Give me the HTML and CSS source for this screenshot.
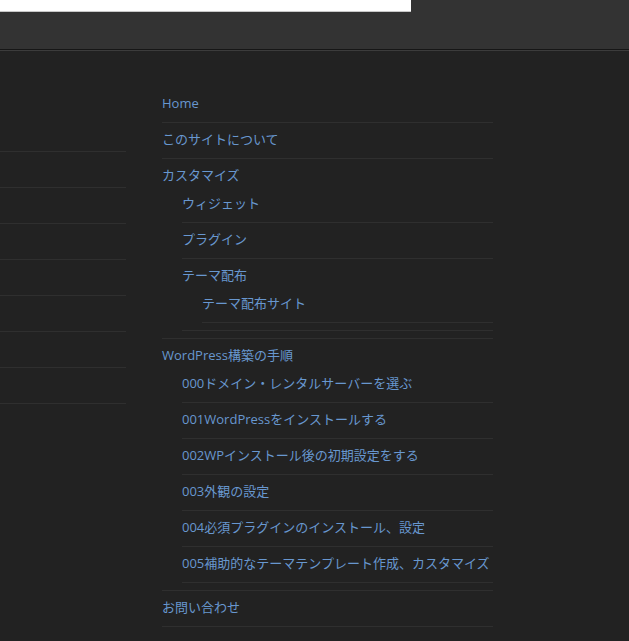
FILE: index.html
```html
<!DOCTYPE html>
<html lang="ja">
<head>
<meta charset="utf-8">
<title>Menu</title>
<link rel="stylesheet" href="styles.css">
</head>
<body>
<header class="site-header">
  <div class="search-box"></div>
</header>
<div class="header-rule"></div>
<main class="content">
  <aside class="left-col">
    <ul class="plain-list">
      <li></li><li></li><li></li><li></li><li></li><li></li><li></li><li></li>
    </ul>
  </aside>
  <nav class="menu">
    <ul class="menu-list">
      <li><a href="#">Home</a></li>
      <li><a href="#">このサイトについて</a></li>
      <li><a href="#">カスタマイズ</a>
        <ul class="sub">
          <li><a href="#">ウィジェット</a></li>
          <li><a href="#">プラグイン</a></li>
          <li><a href="#">テーマ配布</a>
            <ul class="sub">
              <li><a href="#">テーマ配布サイト</a></li>
            </ul>
          </li>
        </ul>
      </li>
      <li><a href="#">WordPress構築の手順</a>
        <ul class="sub">
          <li><a href="#">000ドメイン・レンタルサーバーを選ぶ</a></li>
          <li><a href="#">001WordPressをインストールする</a></li>
          <li><a href="#">002WPインストール後の初期設定をする</a></li>
          <li><a href="#">003外観の設定</a></li>
          <li><a href="#">004必須プラグインのインストール、設定</a></li>
          <li><a href="#">005補助的なテーマテンプレート作成、カスタマイズ</a></li>
        </ul>
      </li>
      <li><a href="#">お問い合わせ</a></li>
    </ul>
  </nav>
</main>
</body>
</html>
```

FILE: styles.css
```css
html, body {
  margin: 0;
  padding: 0;
}
body {
  background: #222222;
  font-family: "Open Sans", "Noto Sans CJK JP", sans-serif;
  font-size: 13px;
  height: 641px;
  overflow: hidden;
}
.site-header {
  height: 49px;
  background: #333333;
  border-bottom: 1px solid #161616;
}
.search-box {
  width: 411px;
  height: 11px;
  background: #ffffff;
  border-bottom: 1px solid #c8c8c8;
}
.header-rule {
  height: 1px;
  background: #3c3c3c;
}
.content {
  display: flex;
  gap: 36px;
}
.left-col {
  width: 126px;
  flex: none;
}
.plain-list {
  list-style: none;
  margin: 65px 0 0;
  padding: 0;
}
.plain-list li {
  height: 35px;
  border-bottom: 1px solid #2f2f2f;
}
.menu {
  width: 331px;
  flex: none;
}
.menu-list {
  list-style: none;
  margin: 36px 0 0;
  padding: 0;
}
.menu-list li {
  padding: 7px 0;
  border-bottom: 1px solid #2f2f2f;
  line-height: 21px;
}
.menu-list a {
  display: block;
  margin: -1px 0 1px;
  color: #6897cf;
  text-decoration: none;
  white-space: nowrap;
}
.sub {
  list-style: none;
  margin: 0;
  padding: 0 0 0 20px;
}
```
